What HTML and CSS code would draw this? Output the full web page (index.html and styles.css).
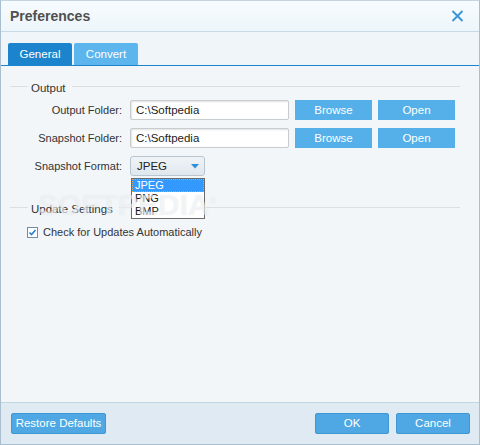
FILE: index.html
```html
<!DOCTYPE html>
<html>
<head>
<meta charset="utf-8">
<title>Preferences</title>
<link rel="stylesheet" href="styles.css">
</head>
<body>
<div class="window">
  <header class="titlebar">
    <span class="title">Preferences</span>
    <svg class="close" width="13" height="12" viewBox="0 0 13 12"><path d="M1.5 1 L11.5 11 M11.5 1 L1.5 11" stroke="#3b96d6" stroke-width="2" fill="none"/></svg>
  </header>
  <nav class="tabs">
    <div class="tab active">General</div>
    <div class="tab">Convert</div>
  </nav>
  <main class="panel">
    <section class="group">
      <div class="group-head"><span class="rule short"></span><span class="legend">Output</span><span class="rule"></span></div>
      <div class="form">
        <span class="label">Output Folder:</span>
        <div class="input">C:\Softpedia</div>
        <div class="btn">Browse</div>
        <div class="btn">Open</div>

        <span class="label">Snapshot Folder:</span>
        <div class="input">C:\Softpedia</div>
        <div class="btn">Browse</div>
        <div class="btn">Open</div>

        <span class="label">Snapshot Format:</span>
        <div class="select-wrap">
          <div class="select"><span>JPEG</span><svg class="arrow" width="8" height="5" viewBox="0 0 8 5"><path d="M0 0 H8 L4 4.5 Z" fill="#2b8fdb"/></svg></div>
          <ul class="dropdown">
            <li class="selected">JPEG</li>
            <li>PNG</li>
            <li>BMP</li>
          </ul>
        </div>
      </div>
    </section>
    <section class="group update">
      <div class="group-head"><span class="rule short"></span><span class="legend">Update Settings</span><span class="rule"></span></div>
      <label class="check">
        <svg class="box" width="11" height="11" viewBox="0 0 11 11"><rect x="0.5" y="0.5" width="10" height="10" fill="#ffffff" stroke="#6f8ea9"/><path d="M2.5 5.5 L4.5 7.5 L8.5 3" stroke="#1f7fd0" stroke-width="1.6" fill="none"/></svg>
        <span>Check for Updates Automatically</span>
      </label>
    </section>
    <span class="watermark">SOFTPEDIA<sup>®</sup></span>
  </main>
  <footer class="footer">
    <div class="fbtn wide">Restore Defaults</div>
    <div class="spacer"></div>
    <div class="fbtn">OK</div>
    <div class="fbtn">Cancel</div>
  </footer>
</div>
</body>
</html>
```
FILE: styles.css
```css
html, body {
  margin: 0;
  padding: 0;
  background: #ffffff;
}
body {
  font-family: "Liberation Sans", Arial, sans-serif;
  font-size: 11px;
  color: #333333;
}
.window {
  width: 478px;
  height: 443px;
  border: 1px solid #a9bfcf;
  border-top-color: #c3d5e1;
  display: flex;
  flex-direction: column;
  background: #f2f6f9;
}
.titlebar {
  height: 30px;
  flex: none;
  border-bottom: 1px solid #c5dae6;
  background: linear-gradient(#f6fbfe, #eef6fb);
  display: flex;
  align-items: center;
  padding: 0 15px 0 9px;
}
.title {
  font-weight: bold;
  font-size: 14px;
  color: #505050;
  flex: 1;
  margin-top: -1px;
}
.close {
  display: block;
  margin-top: -1px;
}
.tabs {
  flex: none;
  display: flex;
  gap: 2px;
  padding: 11px 0 0 7px;
  background: #f0f5f9;
  border-bottom: 1px solid #1b84cc;
}
.tab {
  width: 64px;
  height: 22px;
  line-height: 22px;
  text-align: center;
  color: #ffffff;
  font-size: 11.5px;
  background: #5cb5ed;
  border-radius: 2px 2px 0 0;
}
.tab.active {
  background: #1b84cc;
}
.panel {
  flex: 1;
  position: relative;
  background: #f2f6f9;
  padding: 0 19px 0 9px;
}
.group-head {
  display: flex;
  align-items: center;
  height: 14px;
  gap: 3px;
  margin-top: 15px;
}
.rule {
  flex: 1;
  height: 1px;
  background: #dcdfe2;
  margin-top: -3px;
}
.rule.short {
  flex: none;
  width: 18px;
}
.legend {
  color: #333333;
  padding-right: 3px;
  font-size: 11.5px;
}
.form {
  display: grid;
  grid-template-columns: 113px 160px 77px 77px;
  grid-auto-rows: 20px;
  column-gap: 6px;
  row-gap: 8px;
  margin-top: 5px;
  align-items: center;
  font-size: 11px;
}
.label {
  text-align: right;
  padding-right: 1px;
}
.form .input {
  margin-left: 1px;
}
.input {
  height: 18px;
  line-height: 18px;
  border: 1px solid #c7ccd1;
  border-radius: 2px;
  background: #ffffff;
  box-shadow: inset 1px 1px 2px rgba(0,0,0,0.12);
  padding-left: 5px;
  color: #222222;
  font-size: 11.5px;
}
.btn {
  height: 20px;
  line-height: 20px;
  background: #55b0ea;
  color: #ffffff;
  text-align: center;
  font-size: 11.5px;
}
.select-wrap {
  position: relative;
  grid-column: 2 / span 1;
  height: 20px;
  margin-left: 1px;
}
.select {
  height: 18px;
  border: 1px solid #b9c5cf;
  border-radius: 3px;
  background: linear-gradient(#f0f4f7, #dfe7ee);
  display: flex;
  align-items: center;
  justify-content: space-between;
  padding: 0 5px 0 6px;
  box-sizing: content-box;
  width: 62px;
  color: #222222;
  font-size: 11.5px;
}
.arrow {
  display: block;
}
.dropdown {
  position: absolute;
  left: 1px;
  top: 22px;
  width: 72px;
  margin: 0;
  padding: 0;
  list-style: none;
  border: 1px solid #6b6b6b;
  background: #ffffff;
  z-index: 2;
  color: #111111;
}
.dropdown li {
  height: 13px;
  line-height: 13px;
  padding-left: 3px;
}
.dropdown li.selected {
  background: #3399ff;
  color: #ffffff;
  outline: 1px dotted #e8a040;
  outline-offset: -1px;
}
.group.update .group-head {
  margin-top: 26px;
}
.check {
  display: flex;
  align-items: center;
  gap: 5px;
  margin: 9px 0 0 17px;
  height: 14px;
  font-size: 11px;
}
.box {
  display: block;
}
.watermark {
  position: absolute;
  left: 37px;
  top: 122px;
  font-size: 30px;
  font-weight: bold;
  color: rgba(255,255,255,0.5);
  text-shadow: 0 0 1px rgba(170,180,190,0.3);
  pointer-events: none;
  z-index: 3;
}
.watermark sup {
  font-size: 9px;
}
.footer {
  flex: none;
  height: 42px;
  border-top: 1px solid #c2d5e2;
  background: #dfeaf2;
  display: flex;
  align-items: flex-start;
  padding: 10px 9px 0 10px;
  box-sizing: border-box;
  gap: 7px;
}
.spacer {
  flex: 1;
}
.fbtn {
  width: 72px;
  height: 19px;
  line-height: 19px;
  border: 1px solid #3f97d3;
  border-radius: 2px;
  background: #4fa8e3;
  color: #ffffff;
  text-align: center;
  font-size: 11.5px;
}
.fbtn.wide {
  width: 93px;
}
```
